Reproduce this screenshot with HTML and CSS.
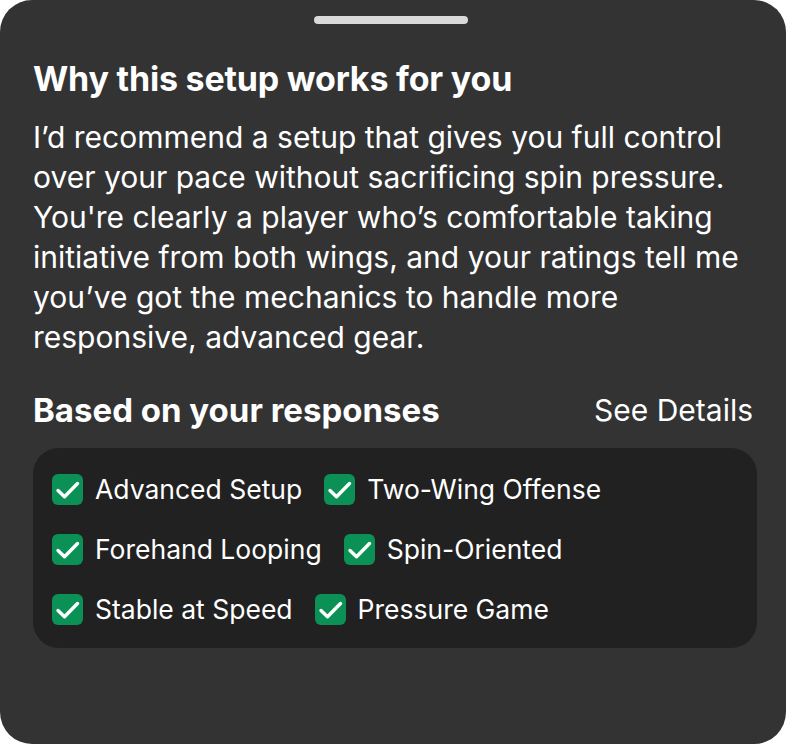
FILE: index.html
```html
<!DOCTYPE html>
<html>
<head>
<meta charset="utf-8">
<link rel="stylesheet" href="styles.css">
</head>
<body>
<div class="sheet">
  <div class="handle"></div>
  <h1 class="title">Why this setup works for you</h1>
  <p class="desc">I’d recommend a setup that gives you full control over your pace without sacrificing spin pressure. You're clearly a player who’s comfortable taking initiative from both wings, and your ratings tell me you’ve got the mechanics to handle more responsive, advanced gear.</p>
  <div class="head-row">
    <h2 class="subtitle">Based on your responses</h2>
    <span class="link">See Details</span>
  </div>
  <div class="box">
    <div class="row">
      <div class="item"><span class="check"><svg viewBox="0 0 31 31"><path d="M6 16.5l6.5 6.2L25.5 9.5"/></svg></span>Advanced Setup</div>
      <div class="item"><span class="check"><svg viewBox="0 0 31 31"><path d="M6 16.5l6.5 6.2L25.5 9.5"/></svg></span>Two-Wing Offense</div>
    </div>
    <div class="row">
      <div class="item"><span class="check"><svg viewBox="0 0 31 31"><path d="M6 16.5l6.5 6.2L25.5 9.5"/></svg></span>Forehand Looping</div>
      <div class="item"><span class="check"><svg viewBox="0 0 31 31"><path d="M6 16.5l6.5 6.2L25.5 9.5"/></svg></span>Spin-Oriented</div>
    </div>
    <div class="row">
      <div class="item"><span class="check"><svg viewBox="0 0 31 31"><path d="M6 16.5l6.5 6.2L25.5 9.5"/></svg></span>Stable at Speed</div>
      <div class="item"><span class="check"><svg viewBox="0 0 31 31"><path d="M6 16.5l6.5 6.2L25.5 9.5"/></svg></span>Pressure Game</div>
    </div>
  </div>
</div>
</body>
</html>
```
FILE: styles.css
```css
html, body { margin: 0; padding: 0; background: #ffffff; }
body { font-family: Inter, "Noto Sans", sans-serif; color: #ffffff; }
.sheet {
  width: 786px; height: 744px; box-sizing: border-box;
  background: #333333; border-radius: 32px;
  padding: 16px 29px 0 33px;
  display: flex; flex-direction: column;
}
.handle {
  align-self: center; width: 154px; height: 8px; border-radius: 4px;
  background: #d9d9d9; margin-left: -8px;
}
.title { margin: 35px 0 0; font-size: 34px; font-weight: 700; line-height: 40px; letter-spacing: -0.2px; }
.desc { margin: 18px 0 0; font-size: 30px; line-height: 40px; font-weight: 400; }
.head-row { display: flex; justify-content: space-between; align-items: center; margin-top: 33px; padding-right: 4px; }
.subtitle { margin: 0; font-size: 33px; font-weight: 700; line-height: 40px; }
.link { font-size: 30px; line-height: 40px; }
.box {
  margin-top: 18px; background: #212121; border-radius: 26px;
  padding: 11px 19px 9px; display: flex; flex-direction: column;
}
.row { display: flex; gap: 22px; height: 60px; align-items: center; }
.item { display: flex; align-items: center; gap: 12px; font-size: 26.5px; }
.check {
  width: 31px; height: 31px; border-radius: 6px; background: #0b9155;
  display: flex; flex: none;
}
.check svg { width: 31px; height: 31px; fill: none; stroke: #fff; stroke-width: 3.4; stroke-linecap: round; stroke-linejoin: round; }
```
